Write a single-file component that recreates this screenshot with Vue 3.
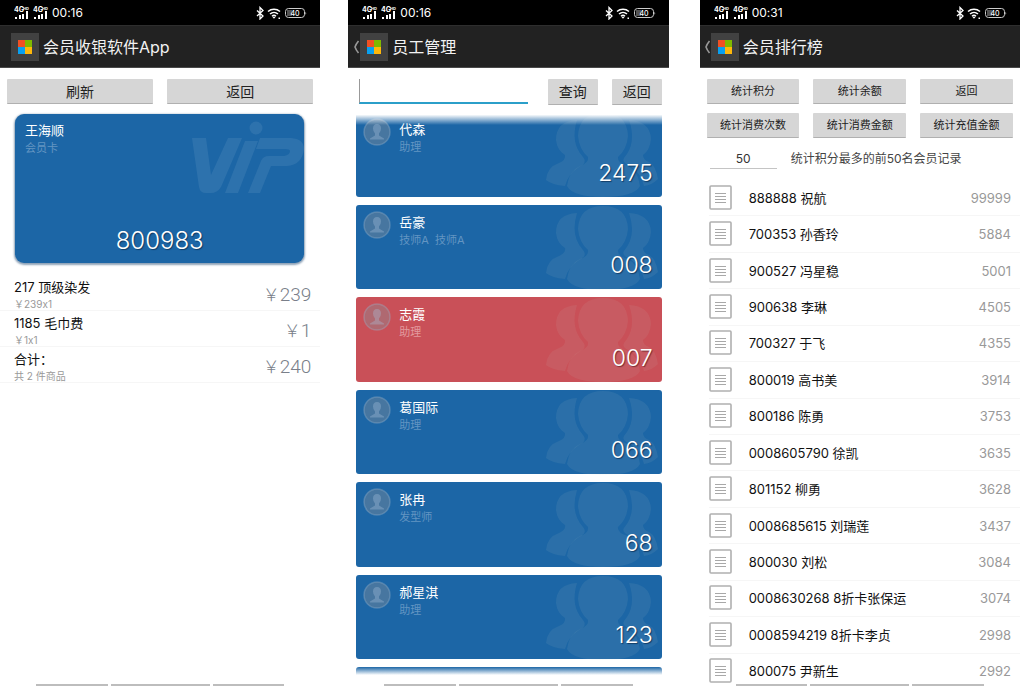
<script setup>
const phones = [
  { key: 'cashier', time: '00:16', title: '会员收银软件App', back: false },
  { key: 'staff', time: '00:16', title: '员工管理', back: true },
  { key: 'ranking', time: '00:31', title: '会员排行榜', back: true },
]

const items = [
  { name: '217 顶级染发', detail: '￥239x1', amount: '239' },
  { name: '1185 毛巾费', detail: '￥1x1', amount: '1' },
  { name: '合计：', detail: '共 2 件商品', amount: '240' },
]

const staff = [
  { name: '代森', role: '助理', code: '2475' },
  { name: '岳豪', role: '技师A  技师A', code: '008' },
  { name: '志霞', role: '助理', code: '007', busy: true },
  { name: '葛国际', role: '助理', code: '066' },
  { name: '张冉', role: '发型师', code: '68' },
  { name: '郝星淇', role: '助理', code: '123' },
]

const actions = ['统计积分', '统计余额', '返回', '统计消费次数', '统计消费金额', '统计充值金额']

const members = [
  ['888888 祝航', '99999'],
  ['700353 孙香玲', '5884'],
  ['900527 冯星稳', '5001'],
  ['900638 李琳', '4505'],
  ['700327 于飞', '4355'],
  ['800019 高书美', '3914'],
  ['800186 陈勇', '3753'],
  ['0008605790 徐凯', '3635'],
  ['801152 柳勇', '3628'],
  ['0008685615 刘瑞莲', '3437'],
  ['800030 刘松', '3084'],
  ['0008630268 8折卡张保运', '3074'],
  ['0008594219 8折卡李贞', '2998'],
  ['800075 尹新生', '2992'],
]
</script>

<template>
  <main class="board">
    <section v-for="p in phones" :key="p.key" class="phone" :class="p.key">
      <div class="status">
        <svg v-for="n in 2" :key="n" class="signal" width="17" height="16" viewBox="0 0 17 16">
          <text x="0" y="7" class="net">4G</text>
          <text x="9" y="5" class="hd">HD</text>
          <path d="M1 12h2v2H1zM5 10h2v4H5zM8 9h2v5H8zM12 6h2v8h-2z" fill="#fff" />
        </svg>
        <span class="time">{{ p.time }}</span>
        <svg class="radio" width="52" height="14" viewBox="0 0 52 14">
          <path d="M1 4.500l6 5.500-3 3V1.500l3 3L1 10" fill="none" stroke="#fff" stroke-width="1.300" />
          <path d="M12 5.500a9 9 0 0 1 12 0M14 8a6 6 0 0 1 8 0M16 10.300a3 3 0 0 1 4 0" fill="none" stroke="#fff" stroke-width="1.500" />
          <path d="M16.500 11h3L18 12.800zM22.500 11.500h1.500v1.500h-1.500z" fill="#fff" />
          <rect x="29.500" y="2.500" width="19" height="9" rx="3" fill="none" stroke="#ccc" />
          <path d="M31 4h5v6h-5z" fill="#555" />
          <path d="M49.500 5.500q1.500 1.700 0 3.500z" fill="#ddd" />
          <text x="39" y="10" class="charge">40</text>
        </svg>
      </div>

      <header class="bar">
        <span class="back">
          <svg v-if="p.back" width="7" height="14" viewBox="0 0 7 14">
            <path d="M5.500 1Q3 4 2 7q1 3 3.500 6" fill="none" stroke="#999" stroke-width="1.600" />
          </svg>
        </span>
        <svg class="logo" width="28" height="28" viewBox="0 0 28 28">
          <rect width="28" height="28" fill="#414141" />
          <rect x="7" y="7" width="7" height="7" fill="#f25022" />
          <rect x="14" y="7" width="7" height="7" fill="#7fb900" />
          <rect x="7" y="14" width="7" height="7" fill="#08a0f0" />
          <rect x="14" y="14" width="7" height="7" fill="#ffb80a" />
        </svg>
        <h1>{{ p.title }}</h1>
      </header>

      <template v-if="p.key === 'cashier'">
        <div class="pair">
          <button type="button">刷新</button>
          <button type="button">返回</button>
        </div>
        <article class="vip">
          <svg class="mark" width="112" height="74" viewBox="0 0 112 74">
            <g fill="#fff" fill-opacity="0.08">
              <path d="M0 17H14L19 54 36 17H50L29 66Q25 72 19 72H14Q8 72 7 66Z" />
              <path d="M53 20H66L46 72H33Z" />
              <circle cx="64" cy="7" r="6.500" />
              <path d="M68 17H99Q112 18 112 28 110 44 95 45H79L68 72H56L69 40Q71 35 77 35H92Q98 34 98 30 98 28 93 28H64Z" />
            </g>
          </svg>
          <h2>王海顺</h2>
          <p>会员卡</p>
          <strong>800983</strong>
        </article>
        <ul class="items">
          <li v-for="i in items" :key="i.name">
            <div>
              <h3>{{ i.name }}</h3>
              <p>{{ i.detail }}</p>
            </div>
            <span class="amount"><i>￥</i>{{ i.amount }}</span>
          </li>
        </ul>
      </template>

      <template v-else-if="p.key === 'staff'">
        <form class="search" @submit.prevent>
          <input type="text" aria-label="员工" />
          <button type="submit">查询</button>
          <button type="button">返回</button>
        </form>
        <div class="people">
          <article v-for="s in staff" :key="s.code" class="person" :class="{ busy: s.busy }">
            <svg class="crowd" width="112" height="85" viewBox="0 0 112 85">
              <g fill="#c8d8c8" fill-opacity="0.09">
                <path d="M31 8Q10 9 10 28 11 38 19 43 20 48 13 51 1 55 0 68 6 73 19 74 22 62 33 55 42 51 37 45 24 31 31 8Z" />
                <path d="M32 24Q33 1 57 1 81 1 82 24 81 37 72 45 71 51 82 54 92 59 94 74 88 85 57 85 27 85 21 74 23 59 34 54 43 51 42 45 33 37 32 24Z" />
                <path d="M83 8Q104 9 105 27 104 38 97 43 97 48 103 50 110 54 112 67 106 73 98 74 95 61 84 54 75 50 78 46 91 31 83 8Z" />
              </g>
            </svg>
            <svg class="avatar" width="28" height="28" viewBox="0 0 28 28">
              <circle cx="14" cy="14" r="13" fill="#8a8f98" fill-opacity="0.4" stroke="#9bb5cc" stroke-opacity="0.35" stroke-width="1.500" />
              <path d="M14 6q4 0 4 4.500 0 3-2 5v2l5 3v1H7v-1l5-3v-2q-2-2-2-5Q10 6 14 6z" fill="#a9c4dc" fill-opacity="0.35" />
            </svg>
            <div class="who">
              <h3>{{ s.name }}</h3>
              <p>{{ s.role }}</p>
            </div>
            <strong>{{ s.code }}</strong>
          </article>
          <div class="person next"></div>
        </div>
      </template>

      <template v-else>
        <div class="actions">
          <button v-for="a in actions" :key="a" type="button">{{ a }}</button>
        </div>
        <div class="limit">
          <input id="limit" type="text" value="50" />
          <label for="limit">统计积分最多的前50名会员记录</label>
        </div>
        <ul class="members">
          <li v-for="m in members" :key="m[0]">
            <svg width="24" height="26" viewBox="0 0 24 26">
              <rect x="1" y="1" width="21" height="23" rx="1" fill="#fff" stroke="#b0b0b0" stroke-width="1.600" />
              <path d="M6 8.500h11M6 11.500h11M6 14.500h11M6 17.500h11" stroke="#a8a8a8" stroke-width="1.200" />
            </svg>
            <span class="name">{{ m[0] }}</span>
            <span class="points">{{ m[1] }}</span>
          </li>
        </ul>
      </template>

      <div class="keys"><i></i><i></i><i></i></div>
    </section>
  </main>
</template>

<style>
body {
  margin: 0;
  background: #fff;
}
</style>

<style scoped>
.board {
  display: flex;
  height: 100vh;
  overflow: hidden;
  font-family: Inter, "Noto Sans CJK SC", sans-serif;
  font-feature-settings: "calt" 0;
  color: #111;
}

h1, h2, h3, p, ul {
  margin: 0;
  padding: 0;
  font-weight: 400;
  list-style: none;
}

.phone {
  flex: 1;
  min-width: 0;
  display: flex;
  flex-direction: column;
}

.staff {
  margin: 0 31px 0 28px;
}

.status {
  display: flex;
  align-items: center;
  flex: none;
  height: 25px;
  padding: 0 12px 0 14px;
  background: #000;
  color: #fff;
}

.signal {
  margin-right: 2px;
}

.net {
  font: 700 7px Inter, sans-serif;
  fill: #fff;
}

.hd {
  font: 700 4px Inter, sans-serif;
  fill: #fff;
}

.charge {
  font: 500 7px Inter, sans-serif;
  fill: #fff;
  text-anchor: middle;
}

.time {
  flex: 1;
  font-size: 12px;
  line-height: 16px;
}

.bar {
  display: flex;
  align-items: center;
  flex: none;
  box-sizing: border-box;
  height: 43px;
  border-top: 1px solid #2e2e2e;
  border-bottom: 1px solid #4a4a4a;
  background: #222;
  color: #f2f2f2;
}

.back {
  display: flex;
  justify-content: flex-end;
  width: 11px;
}

.staff .back {
  width: 12px;
}

.logo {
  margin-right: 4px;
}

.bar h1 {
  font-size: 16px;
  line-height: 24px;
}

button {
  height: 26px;
  padding: 0;
  border: 0;
  border-bottom: 1px solid #b0b0b0;
  border-radius: 1px;
  background: #d6d6d6;
  color: #222;
  font-family: inherit;
  font-size: 14px;
  line-height: 25px;
}

.pair {
  display: grid;
  grid-template-columns: 1fr 1fr;
  gap: 14px;
  padding: 11px 7px 0;
}

.pair button,
.actions button {
  height: 25px;
}

.vip {
  position: relative;
  display: flex;
  flex-direction: column;
  box-sizing: border-box;
  height: 149px;
  margin: 10px 16px 0 15px;
  padding: 7px 10px 8px;
  border-radius: 9px;
  background: #1c66a6;
  box-shadow: 0 1px 2px 1px #8fa3b8;
  color: #fff;
}

.vip .mark {
  position: absolute;
  top: 7px;
  right: 0;
}

.vip h2 {
  font-size: 13px;
  line-height: 18px;
}

.vip p {
  font-size: 11px;
  line-height: 18px;
  color: #6395c2;
}

.vip strong {
  margin-top: auto;
  font-size: 24px;
  text-align: center;
}

strong {
  font-size: 23px;
  font-weight: 300;
  line-height: 28px;
  text-shadow: 1px 1px 1px #123c64;
}

.items {
  margin-top: 12px;
}

.items li {
  display: flex;
  justify-content: space-between;
  box-sizing: border-box;
  height: 36px;
  padding: 3px 9px 0 14px;
  border-bottom: 1px solid #f6f6f6;
}

.items h3 {
  font-size: 13px;
  line-height: 18px;
}

.items p {
  font-size: 10px;
  line-height: 16px;
  color: #999;
}

.amount {
  color: #7a7f8a;
  font-family: Roboto, "Noto Sans CJK SC", sans-serif;
  font-size: 19px;
  font-weight: 300;
  line-height: 34px;
}

.amount i {
  font-size: 17px;
  font-style: normal;
}

.search {
  display: flex;
  padding: 11px 7px 0 11px;
}

.search input {
  flex: 1;
  min-width: 0;
  box-sizing: border-box;
  height: 25px;
  margin-right: 6px;
  padding: 0 4px;
  border: 0;
  border-left: 1px solid #999;
  border-bottom: 2px solid #2b9fc9;
  outline: 0;
  background: #fff;
  font-size: 14px;
}

.search button {
  width: 50px;
  margin-left: 14px;
}

.people {
  position: relative;
  flex: 1;
  min-height: 0;
  display: grid;
  grid-template-rows: repeat(6, minmax(0, 1fr)) 8px;
  gap: 8px;
  margin: 7px 7px 9px 8px;
}

.people::before {
  content: "";
  position: absolute;
  z-index: 1;
  inset: 0 0 auto;
  height: 13px;
  background: linear-gradient(#fff 20%, #fff0);
}

.person {
  position: relative;
  display: flex;
  align-items: flex-start;
  padding: 6px 9px 0 7px;
  border-radius: 3px;
  background: #1c66a6;
  color: #fff;
}

.busy {
  background: #c95058;
}

.next {
  padding: 0;
  border-radius: 3px 3px 0 0;
  background: linear-gradient(#1c66a6, #fff);
}

.crowd {
  position: absolute;
  top: 0;
  right: 4px;
}

.avatar {
  flex: none;
  margin-right: 8px;
}

.who {
  flex: 1;
}

.who h3 {
  font-size: 13px;
  line-height: 22px;
}

.who p {
  font-size: 11px;
  line-height: 15px;
  white-space: pre;
  color: #6395c2;
}

.busy p {
  color: #e29a9e;
}

.person strong {
  position: relative;
  align-self: flex-end;
  margin-bottom: 10px;
}

.busy strong {
  text-shadow: 1px 1px 1px #7a2c32;
}

.actions {
  display: grid;
  grid-template-columns: repeat(3, 1fr);
  gap: 9px 14px;
  padding: 11px 7px 0;
}

.actions button {
  font-size: 11px;
}

.limit {
  display: flex;
  align-items: center;
  padding: 10px 10px 0;
}

.limit input {
  width: 67px;
  height: 21px;
  box-sizing: border-box;
  margin-right: 14px;
  padding: 0;
  border: 0;
  border-bottom: 1px solid #c4c4c4;
  outline: 0;
  background: none;
  color: #333;
  font-family: inherit;
  font-size: 12px;
  text-align: center;
}

.limit label {
  font-size: 12px;
  line-height: 18px;
  color: #444;
}

.members {
  flex: 1;
  min-height: 0;
  display: grid;
  grid-template-rows: repeat(14, minmax(0, 1fr));
  margin: 11px 0 -6px;
}

.members li {
  display: flex;
  align-items: center;
  margin-left: 9px;
  padding-right: 9px;
  border-bottom: 1px solid #f6f6f6;
}

.name {
  flex: 1;
  padding-left: 16px;
  font-size: 13px;
  line-height: 18px;
}

.points {
  font-size: 13px;
  line-height: 18px;
  color: #999;
}

.keys {
  position: relative;
  flex: none;
  display: grid;
  grid-template-columns: 72fr 99fr 72fr;
  gap: 3px;
  height: 2px;
  margin-top: auto;
  padding: 0 36px;
  background: #fff;
}

.keys i {
  background: #bdbdbd;
}
</style>
